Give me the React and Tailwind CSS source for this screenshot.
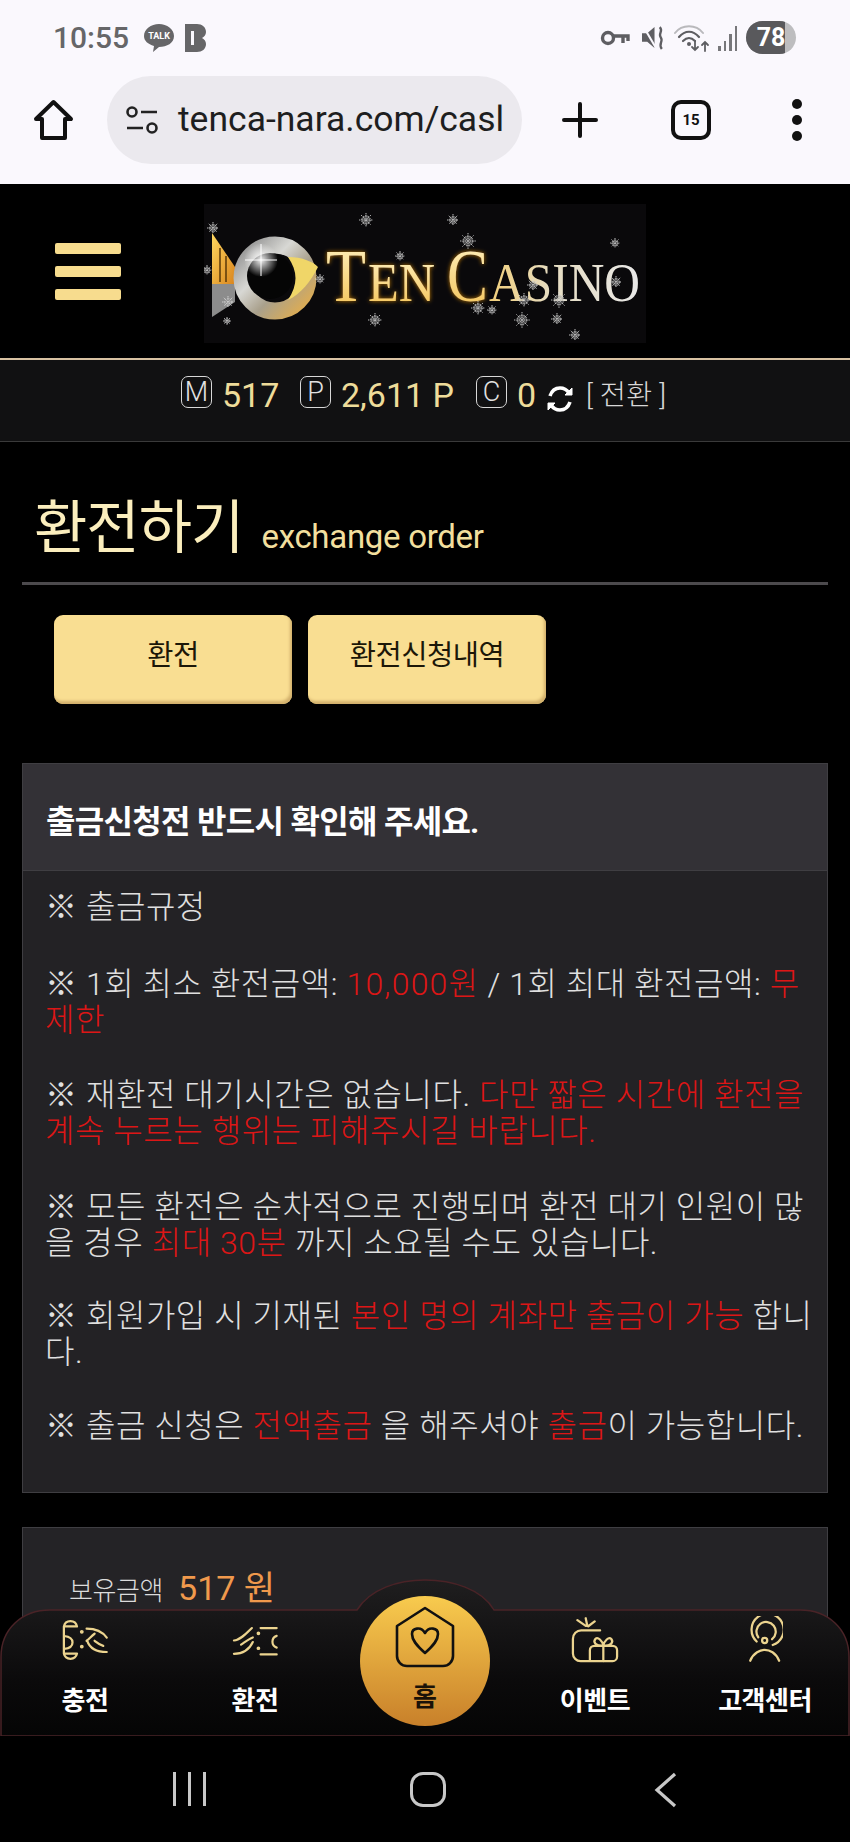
import React from "react";

const flakes = [
  [9, 24, 6], [162, 16, 7], [249, 16, 6], [264, 37, 8], [196, 52, 5], [3, 66, 5], [116, 75, 5], [24, 98, 6], [23, 117, 4],
  [171, 116, 7], [274, 104, 7], [288, 106, 5], [318, 116, 8], [320, 96, 7], [355, 96, 8], [353, 115, 6], [371, 131, 6],
  [411, 39, 5], [412, 78, 6], [329, 81, 6],
];

function Flake({ x, y, r }) {
  return (
    <g stroke="#d8d8d8" strokeWidth="1" opacity="0.85">
      <circle cx={x} cy={y} r={r * 0.62} fill="#9a9a9a" fillOpacity="0.55" strokeDasharray="1.5 1.2" />
      <path d={`M${x - r} ${y}H${x + r}M${x} ${y - r}V${y + r}M${x - r * 0.7} ${y - r * 0.7}L${x + r * 0.7} ${y + r * 0.7}M${x + r * 0.7} ${y - r * 0.7}L${x - r * 0.7} ${y + r * 0.7}`} strokeDasharray="1.4 1" />
    </g>
  );
}

function Logo() {
  const serif = "'Liberation Serif', serif";
  return (
    <svg width="442" height="139" viewBox="0 0 442 139" className="shrink-0">
      <defs>
        <linearGradient id="ring" x1="0" y1="0" x2="1" y2="1">
          <stop offset="0" stopColor="#8f8f8f" />
          <stop offset="0.35" stopColor="#d8d8d4" />
          <stop offset="0.62" stopColor="#a9a08c" />
          <stop offset="1" stopColor="#e4ae4c" />
        </linearGradient>
        <linearGradient id="crown" x1="0" y1="0" x2="1" y2="1">
          <stop offset="0" stopColor="#ffd860" />
          <stop offset="1" stopColor="#d9841c" />
        </linearGradient>
        <linearGradient id="tg" x1="0" y1="0" x2="0" y2="1">
          <stop offset="0" stopColor="#fff3c4" />
          <stop offset="1" stopColor="#f3c050" />
        </linearGradient>
        <linearGradient id="tg2" x1="0" y1="0" x2="1" y2="0">
          <stop offset="0" stopColor="#f2cf7a" />
          <stop offset="0.4" stopColor="#e6dcc0" />
          <stop offset="1" stopColor="#e8e8e8" />
        </linearGradient>
        <filter id="glow" x="-20%" y="-30%" width="140%" height="160%">
          <feGaussianBlur stdDeviation="2.2" result="b" />
          <feFlood floodColor="#d98a10" floodOpacity="0.9" />
          <feComposite in2="b" operator="in" />
          <feMerge>
            <feMergeNode />
            <feMergeNode in="SourceGraphic" />
          </feMerge>
        </filter>
        <radialGradient id="flare">
          <stop offset="0" stopColor="#fff" stopOpacity="0.95" />
          <stop offset="1" stopColor="#fff" stopOpacity="0" />
        </radialGradient>
      </defs>
      <rect width="442" height="139" fill="#0a090b" />
      <path d="M8 29L31 63V80H8Z" fill="url(#crown)" />
      <path d="M16 44V78M22 52V78" stroke="#5a3808" strokeWidth="1.5" />
      <path d="M8 80H31V98L8 113Z" fill="#8c8c8c" />
      <circle cx="71" cy="74" r="33" fill="none" stroke="url(#ring)" strokeWidth="17" />
      <circle cx="66" cy="72" r="23" fill="#050505" />
      <path d="M84 53C98 53 110 58 114 63C107 77 97 90 84 96C94 80 94 68 84 53Z" fill="#f0d668" />
      <circle cx="57" cy="56" r="17" fill="url(#flare)" />
      <path d="M57 40V72M41 56H73" stroke="#fff" strokeWidth="1" />
      <g filter="url(#glow)" fontFamily={serif} fill="url(#tg)">
        <text x="122" y="97" fontSize="73" textLength="40" lengthAdjust="spacingAndGlyphs">T</text>
        <text x="164" y="97" fontSize="55" textLength="67" lengthAdjust="spacingAndGlyphs">EN</text>
        <text x="243" y="97" fontSize="73" textLength="41" lengthAdjust="spacingAndGlyphs">C</text>
      </g>
      <text x="285" y="97" fontSize="55" fontFamily={serif} fill="url(#tg2)" textLength="151" lengthAdjust="spacingAndGlyphs">ASINO</text>
      {flakes.map(([x, y, r], i) => (
        <Flake key={i} x={x} y={y} r={r} />
      ))}
    </svg>
  );
}

function KeyIcon() {
  return (
    <svg width="30" height="20" viewBox="0 0 30 20" fill="none" stroke="#5e5e62" strokeWidth="3.4">
      <circle cx="8" cy="10" r="5.5" />
      <path d="M13 8H28V13M23 8V15" />
    </svg>
  );
}

function MuteIcon() {
  return (
    <svg width="24" height="27" viewBox="0 0 23 24" fill="none">
      <path d="M0 8H5L12 2V22L5 16H0Z" fill="#5e5e62" />
      <path d="M1 1L14 23" stroke="#faf8fd" strokeWidth="2" />
      <path d="M17 2C21 6 15 8 18 12C21 16 15 18 19 23" stroke="#5e5e62" strokeWidth="2.2" />
    </svg>
  );
}

function WifiIcon() {
  return (
    <svg width="36" height="28" viewBox="0 0 36 28" fill="none" strokeLinecap="round">
      <path d="M1 9C8 0 22 0 29 9" stroke="#b9b9bc" strokeWidth="2" />
      <path d="M5 13C11 6 19 6 25 13" stroke="#5e5e62" strokeWidth="2.2" />
      <path d="M9 17C13 13 17 13 21 17" stroke="#5e5e62" strokeWidth="2.2" />
      <circle cx="15" cy="20" r="2" fill="#5e5e62" />
      <path d="M21 17V26M18 23L21 26L24 23M31 27V18M28 21L31 18L34 21" stroke="#5e5e62" strokeWidth="1.8" />
    </svg>
  );
}

function SignalIcon() {
  return (
    <div className="flex items-end gap-[3px] h-[26px]">
      <div className="w-[2.5px] h-[5px] bg-[#77777a]" />
      <div className="w-[2.5px] h-[10px] bg-[#77777a]" />
      <div className="w-[2.5px] h-[17px] bg-[#77777a]" />
      <div className="w-[2.5px] h-[25px] bg-[#77777a]" />
    </div>
  );
}

function StatusBar() {
  return (
    <div className="h-[76px] flex items-start pt-[21px] pl-[53px] pr-[54px] justify-between">
      <div className="flex items-center gap-[15px] h-[33px]">
        <span className="text-[30px] leading-none font-medium text-[#666668]">10:55</span>
        <div className="flex items-center gap-[11px]">
          <svg width="30" height="28" viewBox="0 0 30 28">
            <path d="M15 0C23 0 30 5 30 12C30 19 23 23 15 23L9 28L10 22C4 20 0 17 0 12C0 5 7 0 15 0Z" fill="#666668" />
            <text x="15" y="15" textAnchor="middle" fontSize="9" fontWeight="700" fill="#fff" fontFamily="Roboto, sans-serif">TALK</text>
          </svg>
          <svg width="21" height="28" viewBox="0 0 21 28">
            <path d="M0 0H12C17 0 21 3 21 8C21 11 19 13 17 14C19 15 21 17 21 20C21 25 17 28 12 28H0Z" fill="#666668" />
            <path d="M6 7H9V21H6Z" fill="#faf8fd" />
          </svg>
        </div>
      </div>
      <div className="flex items-center gap-[8px] h-[33px]">
        <div className="mr-[4px]"><KeyIcon /></div>
        <MuteIcon />
        <WifiIcon />
        <SignalIcon />
        <div className="relative w-[50px] h-[33px] rounded-full bg-[#bdbdbf] overflow-hidden ml-[1px]">
          <div className="w-[39px] h-full bg-[#59595c]" />
          <span className="absolute inset-0 flex items-center justify-center text-[25px] font-bold text-white leading-none">78</span>
        </div>
      </div>
    </div>
  );
}

function BrowserBar() {
  return (
    <div className="h-[108px] flex items-start pt-0 relative">
      <div className="w-[107px] h-[88px] flex items-center pl-[33px] shrink-0">
        <svg width="41" height="42" viewBox="0 0 41 42" fill="none" stroke="#111" strokeWidth="4" strokeLinejoin="round">
          <path d="M20.5 3L38 20H32V39H9V20H3Z" />
        </svg>
      </div>
      <div className="w-[415px] h-[88px] rounded-full bg-[#ebe9ee] flex items-center pl-[18px] shrink-0">
        <svg width="34" height="32" viewBox="0 0 34 32" fill="none" stroke="#222" strokeWidth="2.6" className="shrink-0">
          <circle cx="7" cy="8" r="4.5" />
          <path d="M16 8H32M2 24H18" />
          <circle cx="27" cy="24" r="4.5" />
        </svg>
        <span className="ml-[19px] text-[35.5px] leading-none text-[#1e1e20] whitespace-nowrap">tenca-nara.com/casl</span>
      </div>
      <div className="w-[76px] h-[88px] flex items-center justify-end shrink-0">
        <svg width="36" height="36" viewBox="0 0 36 36" stroke="#111" strokeWidth="4" strokeLinecap="round">
          <path d="M18 2V34M2 18H34" />
        </svg>
      </div>
      <div className="ml-[73px] mt-[24px] w-[40px] h-[40px] rounded-[10px] border-[4px] border-[#111] flex items-center justify-center text-[15px] font-bold text-[#111] leading-none shrink-0">15</div>
      <div className="ml-[81px] h-[88px] flex flex-col justify-center gap-[6px] shrink-0">
        <div className="w-[10px] h-[10px] rounded-full bg-[#111]" />
        <div className="w-[10px] h-[10px] rounded-full bg-[#111]" />
        <div className="w-[10px] h-[10px] rounded-full bg-[#111]" />
      </div>
    </div>
  );
}

function Header() {
  return (
    <div className="h-[176px] flex items-center pl-[55px] border-b-2 border-[#d8c2a2] bg-black">
      <div className="w-[66px] flex flex-col gap-[12px] shrink-0">
        <div className="h-[11px] rounded-[2px] bg-[#f7dc8e]" />
        <div className="h-[11px] rounded-[2px] bg-[#f7dc8e]" />
        <div className="h-[11px] rounded-[2px] bg-[#f7dc8e]" />
      </div>
      <div className="ml-[83px] mt-[4px]">
        <Logo />
      </div>
    </div>
  );
}

function Badge({ children }) {
  return (
    <span className="w-[31px] h-[32px] rounded-[7px] border border-[#d8d8d8] flex items-center justify-center text-[27px] font-light text-[#e2e2e2] leading-none shrink-0">
      {children}
    </span>
  );
}

function MoneyBar() {
  return (
    <div className="h-[82px] bg-[#111112] border-b border-[#3a3a3a] flex items-start pt-[16px] pl-[181px] text-[#eedc9a] text-[34px] leading-none">
      <Badge>M</Badge>
      <span className="ml-[10px] w-[78px] pt-[2px]">517</span>
      <Badge>P</Badge>
      <span className="ml-[10px] w-[135px] pt-[2px] whitespace-nowrap">2,611 P</span>
      <Badge>C</Badge>
      <span className="ml-[10px] w-[29px] pt-[2px]">0</span>
      <svg width="28" height="28" viewBox="0 0 28 28" fill="none" stroke="#fff" strokeWidth="3.6" className="mt-[9px] shrink-0">
        <path d="M4 11C6 5 10 3 14 3C18 3 21 5 23 8M24 17C22 23 18 25 14 25C10 25 7 23 5 20" />
        <path d="M26 3V10H19Z M2 25V18H9Z" fill="#fff" strokeWidth="1" />
      </svg>
      <span className="ml-[12px] text-[28.5px] text-[#d8d8d8] font-light pt-[6px] whitespace-nowrap">[ 전환 ]</span>
    </div>
  );
}

function Title() {
  return (
    <div className="mx-[22px] mt-[44px] h-[99px] border-b-[3px] border-[#4c4a4d] pl-[12px] flex items-baseline pt-[10px]">
      <span className="text-[58px] leading-[64px] text-[#fbeebd] tracking-[-1px]">환전하기</span>
      <span className="ml-[18px] text-[33px] leading-none text-[#f2df9e] tracking-[-0.3px]">exchange order</span>
    </div>
  );
}

function TabButton({ children }) {
  return (
    <button className="w-[238px] h-[89px] rounded-[9px] bg-[#f9de92] shadow-[inset_-2px_-3px_3px_#d2b06c] text-[28.5px] text-[#1c1708] leading-none pb-[6px] tracking-[-0.5px]">
      {children}
    </button>
  );
}

function Notice() {
  const red = "text-[#dc1616]";
  return (
    <div className="mx-[22px] mt-[59px] border border-[#3f3e42] bg-[#232225]">
      <div className="h-[107px] bg-[#333136] border-b border-[#3f3e42] flex items-center pl-[23px] pt-[10px] text-[32px] font-bold text-white tracking-[-0.7px] leading-none">
        출금신청전 반드시 확인해 주세요.
      </div>
      <div className="pl-[22px] pr-[10px] pt-[18px] pb-[48px] text-[32px] leading-[36px] text-[#e0e0e0] font-light tracking-[0.55px]">
        <p className="mb-[41px]">※ 출금규정</p>
        <p className="mb-[39px]">
          ※ 1회 최소 환전금액: <span className={`${red} tracking-[1.2px]`}>10,000원</span> / 1회 최대 환전금액: <span className={red}>무제한</span>
        </p>
        <p className="mb-[40px]">
          ※ 재환전 대기시간은 없습니다. <span className={red}>다만 짧은 시간에 환전을 계속 누르는 행위는 피해주시길 바랍니다.</span>
        </p>
        <p className="mb-[37px]">
          ※ 모든 환전은 순차적으로 진행되며 환전 대기 인원이 많을 경우 <span className={red}>최대 30분</span> 까지 소요될 수도 있습니다.
        </p>
        <p className="mb-[38px]">
          ※ 회원가입 시 기재된 <span className={red}>본인 명의 계좌만 출금이 가능</span> 합니다.
        </p>
        <p>
          ※ 출금 신청은 <span className={red}>전액출금</span> 을 해주셔야 <span className={red}>출금</span>이 가능합니다.
        </p>
      </div>
    </div>
  );
}

function Balance() {
  return (
    <div className="mx-[22px] mt-[34px] h-[300px] border border-[#3f3e42] bg-[#242326] pl-[46px] pt-[43px] flex items-baseline">
      <span className="text-[26px] leading-none text-[#dcdcdc] font-light tracking-[-0.4px]">보유금액</span>
      <span className="ml-[15px] text-[34px] leading-none text-[#f0994c]">517 원</span>
    </div>
  );
}

const ICON = { fill: "none", stroke: "#ecd48f", strokeWidth: 7, strokeLinecap: "round", strokeLinejoin: "round" };

function NavIconCharge() {
  return (
    <svg width="48" height="48" viewBox="90 75 150 145" {...ICON}>
      <path d="M99 105A21 21 0 0 1 140 105H99V190H140A21 21 0 0 1 99 190" />
      <path d="M100 135C118 137 126 146 126 155C126 164 118 173 100 175" />
      <path d="M170 112C200 112 222 125 233 140M195 150C205 158 208 162 222 166M172 150C178 168 195 185 233 185M195 128C185 135 178 145 170 150" />
      <circle cx="155" cy="122" r="2.5" fill="#ecd48f" />
      <circle cx="155" cy="168" r="2.5" fill="#ecd48f" />
    </svg>
  );
}

function NavIconExchange() {
  return (
    <svg width="48" height="31" viewBox="600 95 150 100" {...ICON}>
      <path d="M693 105H745M693 190H745" />
      <path d="M745 130A20 20 0 0 0 745 168" />
      <path d="M607 145C625 145 645 125 665 105M630 158C645 148 655 140 668 135M607 188C635 188 655 178 668 150" />
      <circle cx="686" cy="122" r="2.5" fill="#ecd48f" />
      <circle cx="686" cy="170" r="2.5" fill="#ecd48f" />
    </svg>
  );
}

function NavIconGift() {
  return (
    <svg width="48" height="46" viewBox="92 78 150 140" {...ICON}>
      <path d="M183 118H125A26 26 0 0 0 98 145V190A24 24 0 0 0 122 214H222A14 14 0 0 0 236 200V180A14 14 0 0 0 222 166H165A14 14 0 0 0 151 180V214" />
      <path d="M193 166V214" />
      <path d="M193 166C170 168 160 155 168 145C176 137 190 150 193 166C196 150 210 137 218 145C226 155 216 168 193 166Z" />
      <path d="M112 86L138 104M138 80L143 104M166 90L146 105" />
    </svg>
  );
}

function NavIconSupport() {
  return (
    <svg width="36" height="48" viewBox="620 78 112 145" {...ICON}>
      <path d="M650 155A50 50 0 1 1 700 166" />
      <path d="M655 142A30 30 0 1 1 698 148" />
      <circle cx="675" cy="152" r="8" />
      <path d="M630 215C640 190 662 181 675 181C690 181 710 190 720 215" />
    </svg>
  );
}

function NavItem({ icon, label }) {
  return (
    <div className="flex flex-col items-center w-[170px]">
      <div className="h-[54px] flex items-center justify-center">{icon}</div>
      <span className="mt-[21px] text-[26px] leading-none font-bold text-white tracking-[-0.5px]">{label}</span>
    </div>
  );
}

function BottomNav() {
  return (
    <div className="absolute left-0 right-0 bottom-0 h-[157px]">
      <svg width="850" height="157" viewBox="0 0 850 157" className="absolute inset-0">
        <defs>
          <linearGradient id="navbg" x1="0" y1="0" x2="0" y2="1">
            <stop offset="0" stopColor="#1f1e1f" />
            <stop offset="0.65" stopColor="#0b0a0b" />
            <stop offset="1" stopColor="#050505" />
          </linearGradient>
        </defs>
        <path
          d="M1 157V78C1 50 22 31 50 31H357C370 10 398 1 425 1C452 1 482 10 494 31H800C828 31 849 50 849 78V157Z"
          fill="url(#navbg)"
          stroke="#4a2327"
          strokeWidth="1.5"
        />
      </svg>
      <div className="relative flex pt-[34px]">
        <NavItem icon={<NavIconCharge />} label="충전" />
        <NavItem icon={<NavIconExchange />} label="환전" />
        <div className="w-[170px]" />
        <NavItem icon={<NavIconGift />} label="이벤트" />
        <NavItem icon={<NavIconSupport />} label="고객센터" />
      </div>
      <div className="absolute left-[360px] top-[17px] w-[130px] h-[130px] rounded-full bg-gradient-to-b from-[#f8cb4e] to-[#c8802a] flex flex-col items-center pt-[10px]">
        <svg width="62" height="62" viewBox="0 0 62 62" fill="none" stroke="#111" strokeWidth="2.6" strokeLinejoin="round">
          <path d="M31 2L59 20V50A10 10 0 0 1 49 60H13A10 10 0 0 1 3 50V20Z" />
          <path d="M31 47C22 39 18 34 18 28C18 22 27 20 31 27C35 20 44 22 44 28C44 34 40 39 31 47Z" />
        </svg>
        <span className="mt-[16px] text-[26px] leading-none font-bold text-[#1a1208]">홈</span>
      </div>
    </div>
  );
}

function AndroidBar() {
  return (
    <div className="h-[106px] bg-black flex items-start pt-[36px] shrink-0">
      <div className="w-[284px] flex justify-end">
        <div className="flex gap-[12px] mr-[78px]">
          <div className="w-[3px] h-[34px] bg-[#c8c8c8]" />
          <div className="w-[3px] h-[34px] bg-[#c8c8c8]" />
          <div className="w-[3px] h-[34px] bg-[#c8c8c8]" />
        </div>
      </div>
      <div className="ml-[126px] w-[36px] h-[35px] rounded-[13px] border-[3.5px] border-[#c8c8c8]" />
      <svg width="24" height="36" viewBox="0 0 24 36" fill="none" stroke="#c8c8c8" strokeWidth="3.2" className="ml-[208px]">
        <path d="M21 2L3 18L21 34" />
      </svg>
    </div>
  );
}

export default function App() {
  return (
    <div className="w-[850px] h-[1842px] flex flex-col overflow-hidden bg-black font-[Roboto,'Noto_Sans_CJK_KR',sans-serif]">
      <div className="h-[184px] bg-[#faf8fd] shrink-0">
        <StatusBar />
        <BrowserBar />
      </div>
      <div className="relative flex-1 overflow-hidden bg-black">
        <Header />
        <MoneyBar />
        <Title />
        <div className="flex gap-[16px] pl-[54px] mt-[30px]">
          <TabButton>환전</TabButton>
          <TabButton>환전신청내역</TabButton>
        </div>
        <Notice />
        <Balance />
        <BottomNav />
      </div>
      <AndroidBar />
    </div>
  );
}
